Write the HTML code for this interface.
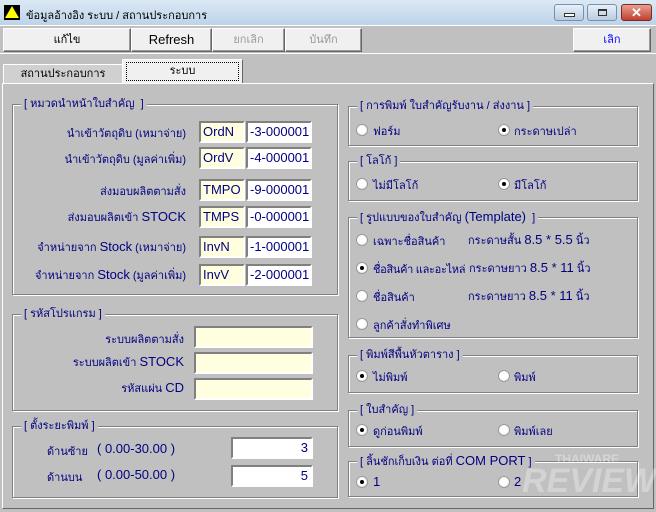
<!DOCTYPE html><html><head><meta charset="utf-8"><style>
*{box-sizing:border-box;margin:0;padding:0}
body{width:656px;height:512px;background:#c0c0c0;position:relative;overflow:hidden;font-family:"Liberation Sans","Noto Sans CJK SC",sans-serif;font-size:11px;color:#000080}
.a{position:absolute;white-space:nowrap}
.title{left:0;top:0;width:656px;height:26px;background:linear-gradient(#dce9f5,#bcd2e8);color:#000;font-size:11px}
.btn{position:absolute;top:28px;height:24px;background:#f0f0f0;border:1px solid;border-color:#fff #666 #666 #fff;box-shadow:inset -1px -1px #999;text-align:center;line-height:22px;color:#000;font-size:11px}
.gb{position:absolute;border:1px solid #808080;box-shadow:1px 1px 0 #fff,inset 1px 1px 0 #fff}
.gb span{position:absolute;top:-8px;left:8px;background:#c0c0c0;padding:0 3px;line-height:14px;color:#000080}
.in{position:absolute;height:22px;border:2px solid;border-color:#808080 #fff #fff #808080;background:#fff;color:#000080;font-size:13px;line-height:18px;padding-left:2px}
.y{background:#ffffe0}
.r{position:absolute;width:12px;height:12px;border-radius:50%;background:radial-gradient(circle at 40% 40%,#fff 50%,#ddd);border:1px solid #999}
.r.on::after{content:"";position:absolute;left:3px;top:3px;width:4px;height:4px;border-radius:50%;background:#000}
.lb{position:absolute;white-space:nowrap;text-align:right}
.l13{font-size:13px}
</style></head><body>
<div class="a title"><div class="a" style="left:4px;top:5px;width:16px;height:15px;background:#000"></div><div class="a" style="left:5px;top:6px;width:0;height:0;border-left:7px solid transparent;border-right:7px solid transparent;border-bottom:12px solid #ff0"></div><div class="a" style="left:26px;top:6px">ข้อมูลอ้างอิง ระบบ / สถานประกอบการ</div>
<div class="a" style="left:554px;top:4px;width:30px;height:17px;border:1px solid #7890b0;border-radius:3px;background:linear-gradient(#e8f0f8,#b8cce0)"><div class="a" style="left:9px;top:8px;width:11px;height:4px;background:#fff;border:1px solid #333"></div></div>
<div class="a" style="left:587px;top:4px;width:30px;height:17px;border:1px solid #7890b0;border-radius:3px;background:linear-gradient(#e8f0f8,#b8cce0)"><div class="a" style="left:10px;top:4px;width:9px;height:7px;border:1px solid #333;border-top-width:2px"></div></div>
<div class="a" style="left:621px;top:4px;width:31px;height:17px;border:1px solid #7a2a20;border-radius:3px;background:linear-gradient(#e8a090,#c04030);color:#fff;font-weight:bold;text-align:center;line-height:15px;font-size:13px">✕</div></div>
<div class="a" style="left:0;top:25px;width:656px;height:1px;background:#fff"></div>
<div class="btn" style="left:3px;width:128px">แก้ไข</div>
<div class="btn l13" style="left:131px;width:81px">Refresh</div>
<div class="btn" style="left:212px;width:73px;color:#999">ยกเลิก</div>
<div class="btn" style="left:285px;width:77px;color:#999">บันทึก</div>
<div class="btn" style="left:573px;width:78px;color:#00f">เลิก</div>
<div class="a" style="left:0;top:53px;width:656px;height:1px;background:#fff"></div>
<div class="a" style="left:3px;top:64px;width:120px;height:20px;border:1px solid;border-color:#fff #666 transparent #fff;background:#d0d0d0;text-align:center;line-height:18px;color:#000">สถานประกอบการ</div>
<div class="a" style="left:122px;top:59px;width:121px;height:25px;border:1px solid;border-color:#fff #666 transparent #fff;background:#f0f0f0;color:#000"><div class="a" style="left:3px;top:2px;width:113px;height:19px;border:1px dotted #000;text-align:center;line-height:16px">ระบบ</div></div>
<div class="a" style="left:2px;top:83px;width:652px;height:426px;border:1px solid;border-color:#fff #666 #666 #fff"></div>

<div class="gb" style="left:12px;top:104px;width:326px;height:191px"><span>[ หมวดนำหน้าใบสำคัญ&nbsp; ]</span></div>
<div class="lb" style="right:470px;top:124px">นำเข้าวัตถุดิบ (เหมาจ่าย)</div>
<div class="lb" style="right:470px;top:150px">นำเข้าวัตถุดิบ (มูลค่าเพิ่ม)</div>
<div class="lb" style="right:470px;top:182px">ส่งมอบผลิตตามสั่ง</div>
<div class="lb" style="right:470px;top:208px">ส่งมอบผลิตเข้า <span class="l13">STOCK</span></div>
<div class="lb" style="right:470px;top:238px">จำหน่ายจาก <span class="l13">Stock</span> (เหมาจ่าย)</div>
<div class="lb" style="right:470px;top:266px">จำหน่ายจาก <span class="l13">Stock</span> (มูลค่าเพิ่ม)</div>
<div class="in y" style="left:199px;top:121px;width:46px">OrdN</div><div class="in" style="left:246px;top:121px;width:66px">-3-000001</div>
<div class="in y" style="left:199px;top:147px;width:46px">OrdV</div><div class="in" style="left:246px;top:147px;width:66px">-4-000001</div>
<div class="in y" style="left:199px;top:179px;width:46px">TMPO</div><div class="in" style="left:246px;top:179px;width:66px">-9-000001</div>
<div class="in y" style="left:199px;top:206px;width:46px">TMPS</div><div class="in" style="left:246px;top:206px;width:66px">-0-000001</div>
<div class="in y" style="left:199px;top:236px;width:46px">InvN</div><div class="in" style="left:246px;top:236px;width:66px">-1-000001</div>
<div class="in y" style="left:199px;top:264px;width:46px">InvV</div><div class="in" style="left:246px;top:264px;width:66px">-2-000001</div>

<div class="gb" style="left:12px;top:314px;width:326px;height:97px"><span>[ รหัสโปรแกรม ]</span></div>
<div class="lb" style="right:472px;top:330px">ระบบผลิตตามสั่ง</div>
<div class="lb" style="right:472px;top:353px">ระบบผลิตเข้า <span class="l13">STOCK</span></div>
<div class="lb" style="right:472px;top:379px">รหัสแผ่น <span class="l13">CD</span></div>
<div class="in y" style="left:194px;top:326px;width:119px"></div>
<div class="in y" style="left:194px;top:352px;width:119px"></div>
<div class="in y" style="left:194px;top:378px;width:119px"></div>

<div class="gb" style="left:12px;top:426px;width:326px;height:72px"><span>[ ตั้งระยะพิมพ์ ]</span></div>
<div class="a" style="left:47px;top:442px">ด้านซ้าย</div><div class="a l13" style="left:97px;top:441px">( 0.00-30.00 )</div>
<div class="a" style="left:47px;top:468px">ด้านบน</div><div class="a l13" style="left:97px;top:467px">( 0.00-50.00 )</div>
<div class="in" style="left:231px;top:437px;width:82px;text-align:right;padding-right:3px">3</div>
<div class="in" style="left:231px;top:465px;width:82px;text-align:right;padding-right:3px">5</div>

<div class="gb" style="left:348px;top:106px;width:290px;height:40px"><span>[ การพิมพ์ ใบสำคัญรับงาน / ส่งงาน ]</span></div>
<div class="r" style="left:356px;top:124px"></div><div class="a" style="left:373px;top:122px">ฟอร์ม</div>
<div class="r on" style="left:498px;top:124px"></div><div class="a" style="left:514px;top:122px">กระดาษเปล่า</div>
<div class="gb" style="left:348px;top:161px;width:290px;height:40px"><span>[ โลโก้ ]</span></div>
<div class="r" style="left:356px;top:178px"></div><div class="a" style="left:373px;top:176px">ไม่มีโลโก้</div>
<div class="r on" style="left:498px;top:178px"></div><div class="a" style="left:514px;top:176px">มีโลโก้</div>
<div class="gb" style="left:348px;top:217px;width:290px;height:121px"><span>[ รูปแบบของใบสำคัญ <span class="l13" style="position:static;padding:0">(Template)</span>&nbsp; ]</span></div>
<div class="r" style="left:356px;top:234px"></div><div class="a" style="left:373px;top:232px">เฉพาะชื่อสินค้า</div><div class="a" style="left:468px;top:231px">กระดาษสั้น <span class="l13">8.5 * 5.5</span> นิ้ว</div>
<div class="r on" style="left:356px;top:262px"></div><div class="a" style="left:373px;top:260px;letter-spacing:-0.3px">ชื่อสินค้า และอะไหล่</div><div class="a" style="left:469px;top:259px">กระดาษยาว <span class="l13">8.5 * 11</span> นิ้ว</div>
<div class="r" style="left:356px;top:290px"></div><div class="a" style="left:373px;top:288px">ชื่อสินค้า</div><div class="a" style="left:468px;top:287px">กระดาษยาว <span class="l13">8.5 * 11</span> นิ้ว</div>
<div class="r" style="left:356px;top:318px"></div><div class="a" style="left:373px;top:316px">ลูกค้าสั่งทำพิเศษ</div>
<div class="gb" style="left:348px;top:355px;width:290px;height:38px"><span>[ พิมพ์สีพื้นหัวตาราง ]</span></div>
<div class="r on" style="left:356px;top:370px"></div><div class="a" style="left:373px;top:368px">ไม่พิมพ์</div>
<div class="r" style="left:498px;top:370px"></div><div class="a" style="left:514px;top:368px">พิมพ์</div>
<div class="gb" style="left:348px;top:410px;width:290px;height:37px"><span>[ ใบสำคัญ ]</span></div>
<div class="r on" style="left:356px;top:424px"></div><div class="a" style="left:373px;top:422px">ดูก่อนพิมพ์</div>
<div class="r" style="left:498px;top:424px"></div><div class="a" style="left:514px;top:422px">พิมพ์เลย</div>
<div class="gb" style="left:348px;top:461px;width:290px;height:36px"><span>[ ลิ้นชักเก็บเงิน ต่อที่ <span class="l13" style="position:static;padding:0">COM PORT</span> ]</span></div>
<div class="r on" style="left:356px;top:476px"></div><div class="a l13" style="left:373px;top:474px">1</div>
<div class="r" style="left:498px;top:476px"></div><div class="a l13" style="left:514px;top:474px">2</div>
<div class="a" style="left:555px;top:452px;color:rgba(255,255,255,0.35);font-weight:bold;font-size:12px">THAIWARE</div>
<div class="a" style="left:522px;top:462px;color:rgba(255,255,255,0.3);font-weight:bold;font-style:italic;font-size:34px">REVIEW</div>
</body></html>
